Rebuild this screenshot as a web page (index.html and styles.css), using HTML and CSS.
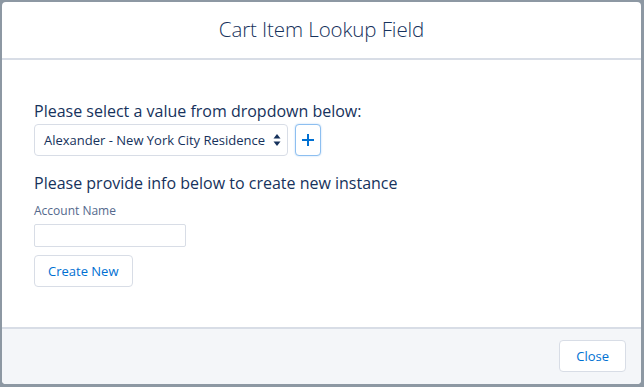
FILE: index.html
```html
<!DOCTYPE html>
<html lang="en">
  <head>
    <meta charset="UTF-8" />
    <title>Cart Item Lookup Field</title>
    <link rel="stylesheet" href="styles.css">
  </head>
  <body>
    <div class="backdrop">
      <section class="modal">
        <header class="modal__header">
          <h2 class="modal__title">Cart Item Lookup Field</h2>
        </header>
        <div class="modal__content">
          <p class="prompt">Please select a value from dropdown below:</p>
          <div class="lookup">
            <div class="select">
              <span class="select__value">Alexander - New York City Residence</span>
              <svg class="select__arrows" width="8" height="14" viewBox="0 0 8 14">
                <path d="M4 1 L7.5 5.5 L0.5 5.5 Z" fill="#16325c" />
                <path d="M4 13 L7.5 8.5 L0.5 8.5 Z" fill="#16325c" />
              </svg>
            </div>
            <button class="icon-button" type="button" aria-label="Add">
              <svg width="14" height="14" viewBox="0 0 14 14">
                <path d="M7 1 V13 M1 7 H13" stroke="#0070d2" stroke-width="2" />
              </svg>
            </button>
          </div>
          <p class="prompt prompt--second">Please provide info below to create new instance</p>
          <label class="field__label">Account Name</label>
          <input class="field__input" type="text" />
          <button class="button" type="button">Create New</button>
        </div>
        <footer class="modal__footer">
          <button class="button" type="button">Close</button>
        </footer>
      </section>
    </div>
  </body>
</html>
```

FILE: styles.css
```css
:root {
  --color-backdrop: #8d98a3;
  --color-text: #16325c;
  --color-weak: #54698d;
  --color-border: #d8dde6;
  --color-brand: #0070d2;
  --color-footer: #f4f6f9;
}

*,
*::before,
*::after {
  box-sizing: border-box;
}

html,
body {
  height: 100%;
}

body {
  margin: 0;
  font-family: "Open Sans", "Noto Sans", sans-serif;
  color: var(--color-text);
  background-color: var(--color-backdrop);
}

.backdrop {
  height: 100%;
  padding: 2px 3px 3px 2px;
}

.modal {
  height: 100%;
  display: flex;
  flex-direction: column;
  background-color: #fff;
  border-radius: 4px;
  overflow: hidden;
}

.modal__header {
  flex-shrink: 0;
  height: 58px;
  display: flex;
  justify-content: center;
  align-items: center;
  border-bottom: 2px solid var(--color-border);
}

.modal__title {
  margin: 0 0 2px;
  font-size: 20.5px;
  font-weight: 300;
  letter-spacing: -0.1px;
}

.modal__content {
  flex: 1 1 auto;
  display: flex;
  flex-direction: column;
  align-items: flex-start;
  padding: 40px 32px 0;
}

.prompt {
  margin: 0;
  font-size: 16px;
  line-height: 22px;
}

.prompt--second {
  margin-top: 16px;
}

.lookup {
  display: flex;
  align-items: center;
  gap: 7px;
  margin-top: 2px;
}

.select {
  width: 254px;
  height: 32px;
  display: flex;
  justify-content: space-between;
  align-items: center;
  padding: 0 6px 0 9px;
  border: 1px solid var(--color-border);
  border-radius: 4px;
  font-size: 13px;
}

.select__arrows {
  display: block;
}

.icon-button {
  width: 26px;
  height: 32px;
  display: flex;
  justify-content: center;
  align-items: center;
  padding: 0;
  background-color: #fff;
  border: 1px solid #8dbff0;
  border-radius: 4px;
  box-shadow: 0 0 2px #b6d6f5;
}

.field__label {
  margin-top: 8px;
  font-size: 12px;
  line-height: 18px;
  color: var(--color-weak);
}

.field__input {
  width: 152px;
  height: 23px;
  margin: 4px 0 0;
  border: 1px solid var(--color-border);
  border-radius: 2px;
}

.button {
  height: 32px;
  padding: 0 16px;
  font-family: inherit;
  font-size: 13px;
  color: var(--color-brand);
  background-color: #fff;
  border: 1px solid var(--color-border);
  border-radius: 4px;
}

.modal__content .button {
  margin-top: 8px;
  padding: 0 13px;
}

.modal__footer {
  flex-shrink: 0;
  height: 57px;
  display: flex;
  justify-content: flex-end;
  align-items: center;
  padding: 0 15px 2px;
  border-top: 2px solid var(--color-border);
  background-color: var(--color-footer);
}
```
